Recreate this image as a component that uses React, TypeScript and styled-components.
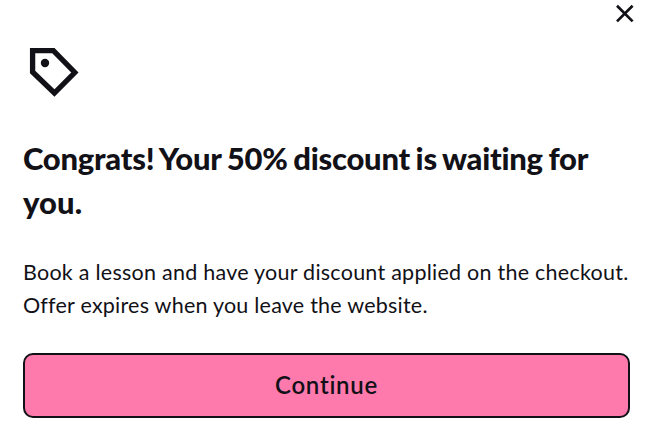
import React from "react";
import styled, { createGlobalStyle } from "styled-components";

const GlobalStyle = createGlobalStyle`
  * { box-sizing: border-box; }
  body { margin: 0; background: #fff; color: #121117; font-family: Lato, "Noto Sans", sans-serif; }
`;

const Dialog = styled.main`
  display: flex;
  flex-direction: column;
  height: 439px;
  padding: 0 25px 21px 23px;
  overflow: hidden;
`;

const Header = styled.header`
  display: flex;
  justify-content: flex-end;
  height: 41px;
  margin-right: -11px;
`;

const CloseButton = styled.button`
  display: flex;
  width: 32px;
  height: 32px;
  padding: 0;
  border: 0;
  background: none;
  color: inherit;
`;

const TagIcon = styled.svg`
  flex: none;
  width: 64px;
  height: 64px;
`;

const Title = styled.h1`
  margin: 31px 0 0;
  font-size: 31px;
  font-weight: 900;
  line-height: 44px;
`;

const Description = styled.p`
  margin: 32px 0 0;
  font-size: 21.5px;
  line-height: 33px;
`;

const Line = styled.span<{ $tracking: number; $words?: number }>`
  display: block;
  white-space: nowrap;
  letter-spacing: ${({ $tracking }) => $tracking}px;
  word-spacing: ${({ $words = 0 }) => $words}px;
`;

const ContinueButton = styled.button`
  flex: none;
  width: 607px;
  height: 65px;
  margin-top: auto;
  padding: 0 0 2px;
  border: 2px solid #121117;
  border-radius: 10px;
  background: #ff7aac;
  color: #121117;
  font: 600 24px/1 Lato, "Noto Sans", sans-serif;
  letter-spacing: 0.75px;
`;

export default function App() {
  return (
    <>
      <GlobalStyle />
      <Dialog role="dialog" aria-labelledby="offer-title">
        <Header>
          <CloseButton aria-label="Close">
            <svg width="32" height="32" viewBox="0 0 32 32" fill="none" stroke="currentColor" strokeWidth="2.7">
              <path d="M8 5.8 23.6 21.4M23.6 5.8 8 21.4" />
            </svg>
          </CloseButton>
        </Header>
        <TagIcon viewBox="0 0 64 64" fill="none">
          <path d="M9.6 9.6H30.4L51.8 31.5 31.4 52 9.6 31Z" stroke="#121117" strokeWidth="5.3" />
          <circle cx="22" cy="22" r="4.2" fill="#121117" />
        </TagIcon>
        <Title id="offer-title">
          <Line $tracking={-0.24} $words={-1.5}>Congrats! Your 50% discount is waiting for</Line>
          <Line $tracking={0.1}>you.</Line>
        </Title>
        <Description>
          <Line $tracking={0.25}>Book a lesson and have your discount applied on the checkout.</Line>
          <Line $tracking={0.23}>Offer expires when you leave the website.</Line>
        </Description>
        <ContinueButton>Continue</ContinueButton>
      </Dialog>
    </>
  );
}
